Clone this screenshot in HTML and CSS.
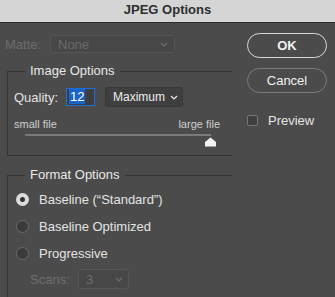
FILE: index.html
```html
<!DOCTYPE html>
<html>
<head>
  <title>JPEG Options</title>
  <link rel="stylesheet" href="styles.css">
</head>
<body>
  <div class="titlebar">JPEG Options</div>
  <div class="dialog">
    <div class="main">
      <div class="matte-row">
        <span class="matte-label">Matte:</span>
        <div class="select matte-select">
          <span>None</span>
          <svg class="chevron" width="8" height="5" viewBox="0 0 8 5"><path d="M1 1 L4 4 L7 1" fill="none" stroke="currentColor" stroke-width="1.2"/></svg>
        </div>
      </div>

      <fieldset class="group image-group">
        <legend>Image Options</legend>
        <div class="quality-row">
          <span class="quality-label">Quality:</span>
          <span class="num-input"><span class="num-sel">12</span></span>
          <div class="select quality-select">
            <span>Maximum</span>
            <svg class="chevron" width="8" height="5" viewBox="0 0 8 5"><path d="M1 1 L4 4 L7 1" fill="none" stroke="currentColor" stroke-width="1.2"/></svg>
          </div>
        </div>
        <div class="size-labels">
          <span>small file</span>
          <span>large file</span>
        </div>
        <div class="slider">
          <div class="track"></div>
          <svg class="thumb" width="13" height="10" viewBox="0 0 13 10"><path d="M6.5 0.5 L12 5 L12 9.5 L1 9.5 L1 5 Z" fill="#f2f2f2"/></svg>
        </div>
      </fieldset>

      <fieldset class="group format-group">
        <legend>Format Options</legend>
        <div class="radio-row"><span class="radio checked"></span><span>Baseline (“Standard”)</span></div>
        <div class="radio-row"><span class="radio"></span><span>Baseline Optimized</span></div>
        <div class="radio-row"><span class="radio"></span><span>Progressive</span></div>
        <div class="scans-row">
          <span class="scans-label">Scans:</span>
          <div class="select scans-select">
            <span>3</span>
            <svg class="chevron" width="8" height="5" viewBox="0 0 8 5"><path d="M1 1 L4 4 L7 1" fill="none" stroke="currentColor" stroke-width="1.2"/></svg>
          </div>
        </div>
      </fieldset>
    </div>

    <div class="side">
      <button class="btn btn-ok">OK</button>
      <button class="btn btn-cancel">Cancel</button>
      <label class="check-row"><span class="checkbox"></span><span>Preview</span></label>
    </div>
  </div>
</body>
</html>
```

FILE: styles.css
```css
html, body {
  margin: 0;
  padding: 0;
}

body {
  width: 335px;
  height: 297px;
  overflow: hidden;
  background-color: #4b4b4b;
  color: #e4e4e4;
  font-family: "Liberation Sans", Arial, sans-serif;
  font-size: 13px;
}

.titlebar {
  height: 22px;
  line-height: 20px;
  background-color: #d5d5d5;
  border-bottom: 1px solid #2b2b2b;
  color: #2e2e2e;
  font-weight: bold;
  font-size: 13px;
  text-align: center;
}

.dialog {
  display: flex;
  gap: 15px;
}

.main {
  width: 227px;
  margin-left: 5px;
}

/* selects */
.select {
  display: flex;
  align-items: center;
  justify-content: space-between;
  box-sizing: border-box;
  border-radius: 3px;
}

.chevron {
  flex: none;
}

.matte-row {
  display: flex;
  align-items: center;
  margin-top: 12px;
  height: 18px;
  color: #6c6c6c;
}

.matte-label {
  width: 45px;
}

.matte-select {
  width: 125px;
  height: 18px;
  padding: 0 6px 0 7px;
  background-color: #474747;
  border: 1px solid #555555;
  color: #6a6a6a;
}

/* groups */
.group {
  margin: 0 0 0 2px;
  border: 1px solid #343434;
  border-right: none;
  padding: 0 0 0 6px;
}

.group legend {
  margin-left: 11px;
  padding: 0 5px;
  line-height: 16px;
  font-size: 13px;
  color: #e8e8e8;
}

.image-group {
  margin-top: 10px;
  height: 91px;
}

.quality-row {
  display: flex;
  align-items: center;
  margin-top: 8px;
  height: 20px;
}

.quality-label {
  width: 52px;
}

.num-input {
  box-sizing: border-box;
  width: 29px;
  height: 18px;
  border: 1.5px solid #1d6ce0;
  background-color: #3e3e3e;
  padding: 1px 0 0 2px;
  line-height: 14px;
}

.num-sel {
  background-color: #1a63c8;
  color: #ffffff;
  padding: 0 1px;
}

.quality-select {
  width: 78px;
  height: 20px;
  margin-left: 10px;
  padding: 0 4px 0 7px;
  background-color: #3f3f3f;
  border: 1px solid #393939;
  color: #ececec;
  font-size: 12px;
}

.size-labels {
  display: flex;
  justify-content: space-between;
  width: 206px;
  margin-top: 11px;
  font-size: 11px;
  color: #cfcfcf;
}

.slider {
  position: relative;
  margin: 4px 0 0 11px;
  width: 186px;
  height: 16px;
}

.track {
  height: 2px;
  background-color: #7a7a7a;
}

.thumb {
  position: absolute;
  right: -6px;
  top: 3px;
}

.format-group {
  margin-top: 11px;
  height: 129px;
  border-bottom: none;
}

.radio-row {
  display: flex;
  align-items: center;
  gap: 10px;
  height: 27px;
  padding-left: 2px;
}

.format-group .radio-row:first-of-type {
  margin-top: 3px;
}

.radio {
  box-sizing: border-box;
  width: 13px;
  height: 13px;
  border-radius: 50%;
  background-color: #3b3b3b;
  border: 1px solid #6a6a6a;
}

.radio.checked {
  border: 4px solid #dcdcdc;
  background-clip: padding-box;
  background-color: #2f2f2f;
}

.scans-row {
  display: flex;
  align-items: center;
  margin-top: 2px;
  padding-left: 16px;
  height: 20px;
  color: #6e6e6e;
}

.scans-label {
  width: 48px;
}

.scans-select {
  width: 51px;
  height: 20px;
  padding: 0 5px 0 7px;
  background-color: #474747;
  border: 1px solid #565656;
  color: #6c6c6c;
}

/* right side */
.side {
  display: flex;
  flex-direction: column;
  width: 80px;
}

.btn {
  font-family: inherit;
  font-size: 13px;
  color: #f2f2f2;
  background-color: transparent;
  border-radius: 13px;
  height: 25px;
  padding: 0;
}

.btn-ok {
  margin-top: 10px;
  border: 1.5px solid #d8d8d8;
  font-weight: bold;
}

.btn-cancel {
  margin-top: 10px;
  border: 1px solid #7b7b7b;
}

.check-row {
  display: flex;
  align-items: center;
  gap: 10px;
  margin-top: 20px;
}

.checkbox {
  box-sizing: border-box;
  width: 11px;
  height: 11px;
  border: 1px solid #777777;
  border-radius: 2px;
  background-color: #3f3f3f;
}
```
